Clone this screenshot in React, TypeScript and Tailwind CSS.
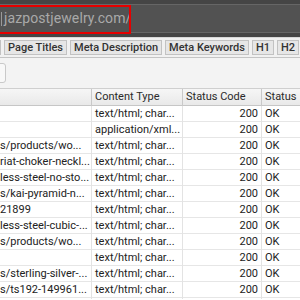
import React from "react";

const ROWS: { url: string; type: string }[] = [
  { url: "", type: "text/html; char..." },
  { url: "", type: "application/xml..." },
  { url: "s/products/wo...", type: "text/html; char..." },
  { url: "riat-choker-neckl...", type: "text/html; char..." },
  { url: "less-steel-no-sto...", type: "text/html; char..." },
  { url: "s/kai-pyramid-n...", type: "text/html; char..." },
  { url: "21899", type: "text/html; char..." },
  { url: "less-steel-cubic-...", type: "text/html; char..." },
  { url: "s/products/wo...", type: "text/html; char..." },
  { url: "", type: "text/html; char..." },
  { url: "s/sterling-silver-...", type: "text/html; char..." },
  { url: "s/ts192-149961...", type: "text/html; char..." },
];

const TABS = ["Page Titles", "Meta Description", "Meta Keywords", "H1", "H2"];

export default function App() {
  return (
    <div className="w-[300px] h-[300px] overflow-hidden bg-white font-['Roboto',sans-serif] text-[11px] text-[#222]">
      {/* Address bar */}
      <div className="relative h-[37px] bg-[#454545] pt-[4px]">
        <div className="h-[29px] border-y border-[#666] bg-[#525252] flex items-center overflow-hidden">
          <span className="ml-[1px] w-[1px] h-[14px] bg-[#9a9a9a]" />
          <span className="ml-[2px] text-[14px] tracking-[0.1px] text-[#a9a9a9] whitespace-nowrap">jazpostjewelry.com/</span>
        </div>
        {/* red highlight */}
        <div className="absolute left-[-3px] top-[5px] w-[134px] h-[29px] border-2 border-[#e50000]" />
      </div>

      {/* Tabs */}
      <div className="h-[21px] bg-[#f1f1f1] border-t border-[#d8d8d8] border-b border-b-[#c4c4c4] flex items-end gap-[3px] pl-0 overflow-hidden whitespace-nowrap">
        <div className="h-[15px] w-[5px] -ml-[1px] mb-[2px] bg-[#e6e6e6] border border-[#c2c2c2]" />
        {TABS.map((t) => (
          <div
            key={t}
            className="h-[15px] mb-[2px] px-[3px] bg-[#e6e6e6] border border-[#c2c2c2] flex items-center font-medium text-[#333] leading-none"
          >
            {t}
          </div>
        ))}
        <div className="h-[15px] w-[10px] mb-[2px] bg-[#e6e6e6] border border-[#c2c2c2]" />
      </div>

      {/* Toolbar */}
      <div className="h-[31px] bg-[#f3f3f3] border-b border-[#cfcfcf] flex items-center">
        <div className="h-[20px] w-[7px] -ml-[1px] rounded-r-[3px] border border-[#c9c9c9] bg-[#f8f8f8]" />
      </div>

      {/* Table header */}
      <div className="h-[17px] grid grid-cols-[92px_91px_79px_38px] bg-gradient-to-b from-[#f6f6f6] to-[#e9e9e9] border-b border-[#c6c6c6] text-[#2a2a2a]">
        <div className="border-r border-[#c9c9c9]" />
        <div className="border-r border-[#c9c9c9] pl-[3px] flex items-center">Content Type</div>
        <div className="border-r border-[#c9c9c9] pl-[3px] flex items-center">Status Code</div>
        <div className="pl-[3px] flex items-center">Status</div>
      </div>

      {/* Rows */}
      {ROWS.map((r, i) => (
        <div key={i} className="h-[16px] grid grid-cols-[92px_91px_79px_38px] border-b border-[#e6e6e6]">
          <div className="border-r border-[#e3e3e3] flex items-center overflow-hidden whitespace-nowrap">{r.url}</div>
          <div className="border-r border-[#e3e3e3] pl-[3px] flex items-center whitespace-nowrap overflow-hidden">{r.type}</div>
          <div className="border-r border-[#e3e3e3] pr-[3px] flex items-center justify-end">200</div>
          <div className="pl-[3px] flex items-center">OK</div>
        </div>
      ))}
    </div>
  );
}
